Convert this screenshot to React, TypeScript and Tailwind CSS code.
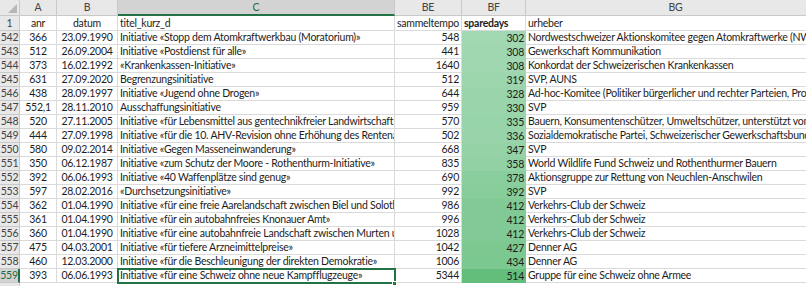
import React from "react";

type Row = [number, string, string, string, number, number, string];

const rows: Row[] = [
  [542, "366", "23.09.1990", "Initiative «Stopp dem Atomkraftwerkbau (Moratorium)»", 548, 302, "Nordwestschweizer Aktionskomitee gegen Atomkraftwerke (NWA)"],
  [543, "512", "26.09.2004", "Initiative «Postdienst für alle»", 441, 308, "Gewerkschaft Kommunikation"],
  [544, "373", "16.02.1992", "«Krankenkassen-Initiative»", 1640, 308, "Konkordat der Schweizerischen Krankenkassen"],
  [545, "631", "27.09.2020", "Begrenzungsinitiative", 512, 319, "SVP, AUNS"],
  [546, "438", "28.09.1997", "Initiative «Jugend ohne Drogen»", 644, 328, "Ad-hoc-Komitee (Politiker bürgerlicher und rechter Parteien, Prominente)"],
  [547, "552,1", "28.11.2010", "Ausschaffungsinitiative", 959, 330, "SVP"],
  [548, "520", "27.11.2005", "Initiative «für Lebensmittel aus gentechnikfreier Landwirtschaft»", 570, 335, "Bauern, Konsumentenschützer, Umweltschützer, unterstützt vom WWF"],
  [549, "444", "27.09.1998", "Initiative «für die 10. AHV-Revision ohne Erhöhung des Rentenalters»", 502, 336, "Sozialdemokratische Partei, Schweizerischer Gewerkschaftsbund"],
  [550, "580", "09.02.2014", "Initiative «Gegen Masseneinwanderung»", 668, 347, "SVP"],
  [551, "350", "06.12.1987", "Initiative «zum Schutz der Moore - Rothenthurm-Initiative»", 835, 358, "World Wildlife Fund Schweiz und Rothenthurmer Bauern"],
  [552, "392", "06.06.1993", "Initiative «40 Waffenplätze sind genug»", 690, 378, "Aktionsgruppe zur Rettung von Neuchlen-Anschwilen"],
  [553, "597", "28.02.2016", "«Durchsetzungsinitiative»", 992, 392, "SVP"],
  [554, "362", "01.04.1990", "Initiative «für eine freie Aarelandschaft zwischen Biel und Solothurn/Zuchwil»", 986, 412, "Verkehrs-Club der Schweiz"],
  [555, "361", "01.04.1990", "Initiative «für ein autobahnfreies Knonauer Amt»", 996, 412, "Verkehrs-Club der Schweiz"],
  [556, "360", "01.04.1990", "Initiative «für eine autobahnfreie Landschaft zwischen Murten und Yverdon»", 1028, 412, "Verkehrs-Club der Schweiz"],
  [557, "475", "04.03.2001", "Initiative «für tiefere Arzneimittelpreise»", 1042, 427, "Denner AG"],
  [558, "460", "12.03.2000", "Initiative «für die Beschleunigung der direkten Demokratie»", 1006, 434, "Denner AG"],
  [559, "393", "06.06.1993", "Initiative «für eine Schweiz ohne neue Kampfflugzeuge»", 5344, 514, "Gruppe für eine Schweiz ohne Armee"],
];

// excel-style 2-colour scale, white -> green
const scale = (v: number) => {
  const t = Math.min(1, v / 514);
  const mix = (a: number, b: number) => Math.round(a + (b - a) * t);
  return `rgb(${mix(252, 99)}, ${mix(252, 190)}, ${mix(255, 123)})`;
};

const cell = "h-full shrink-0 overflow-hidden whitespace-nowrap border-r border-b border-[#dadada] px-[2px]";
const head = "h-full shrink-0 border-r border-b border-[#c9c9c9] bg-[#e8e8e8] flex items-center justify-center text-[#444]";

export default function App() {
  return (
    <div className="relative h-[286px] w-[806px] overflow-hidden bg-white font-['Lato','Liberation_Sans',sans-serif] text-[10.5px] leading-none tracking-[-0.25px] text-[#1d1d1d]">
      {/* column letters */}
      <div className="flex h-[16px]">
        <div className={`${head} relative w-[20px]`}>
          <div className="absolute right-[2px] bottom-[2px] h-0 w-0 border-b-[9px] border-l-[9px] border-b-[#b7b7b7] border-l-transparent" />
        </div>
        <div className={`${head} w-[37px]`}>A</div>
        <div className={`${head} w-[61px]`}>B</div>
        <div className="flex h-full w-[277px] shrink-0 items-center justify-center border-r border-b-2 border-r-[#c9c9c9] border-b-[#217346] bg-[#d3d3d3] text-[#1e6b41]">
          C
        </div>
        <div className={`${head} w-[67px]`}>BE</div>
        <div className={`${head} w-[64px]`}>BF</div>
        <div className={`${head} w-[300px]`}>BG</div>
      </div>

      {/* field names */}
      <div className="flex h-[15px]">
        <div className={`${head} w-[20px]`}>1</div>
        <div className={`${cell} flex w-[37px] items-center justify-center`}>anr</div>
        <div className={`${cell} flex w-[61px] items-center justify-center`}>datum</div>
        <div className={`${cell} flex w-[277px] items-center`}>titel_kurz_d</div>
        <div className={`${cell} flex w-[67px] items-center`}>sammeltempo</div>
        <div className={`${cell} flex w-[64px] items-center font-bold`}>sparedays</div>
        <div className={`${cell} flex w-[300px] items-center`}>urheber</div>
      </div>

      {rows.map(([n, anr, datum, titel, tempo, days, urheber]) => {
        const sel = n === 559;
        return (
          <div key={n} className="flex h-[14px]">
            <div
              className={
                sel
                  ? "flex h-full w-[20px] shrink-0 items-center justify-center border-r-2 border-b border-r-[#217346] border-b-[#c9c9c9] bg-[#d3d3d3] text-[#1e6b41]"
                  : `${head} w-[20px]`
              }
            >
              {n}
            </div>
            <div className={`${cell} flex w-[37px] items-center justify-center`}>{anr}</div>
            <div className={`${cell} flex w-[61px] items-center justify-center`}>{datum}</div>
            <div className={`${cell} flex w-[277px] items-center`}>{titel}</div>
            <div className={`${cell} flex w-[67px] items-center justify-end`}>{tempo}</div>
            <div
              className="flex h-full w-[64px] shrink-0 items-center justify-end px-[2px]"
              style={{ backgroundColor: scale(days) }}
            >
              {days}
            </div>
            <div className={`${cell} flex w-[300px] items-center`}>{urheber}</div>
          </div>
        );
      })}

      <div className="flex h-[14px]">
        <div className={`${head} w-[20px]`} />
        <div className="h-full flex-1" />
      </div>

      {/* active cell C559 */}
      <div className="pointer-events-none absolute top-[268px] left-[117px] h-[16px] w-[279px] border-2 border-[#217346]" />
      <div className="absolute top-[281px] left-[392px] h-[5px] w-[5px] border border-white bg-[#217346]" />
    </div>
  );
}
